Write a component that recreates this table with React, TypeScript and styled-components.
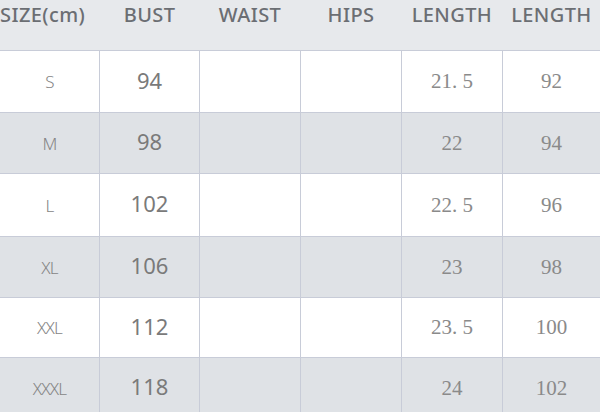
import React from 'react'
import styled, { createGlobalStyle } from 'styled-components'

const GlobalStyle = createGlobalStyle`
  html, body {
    margin: 0;
    padding: 0;
    background: #ffffff;
    overflow: hidden;
  }
`

const COLS = '99px 99px 100px 100px 100px 1fr'

const headers = ['SIZE(cm)', 'BUST', 'WAIST', 'HIPS', 'LENGTH', 'LENGTH']

const rows = [
  { size: 'S', bust: '94', len: '21. 5', full: '92', h: 61 },
  { size: 'M', bust: '98', len: '22', full: '94', h: 60 },
  { size: 'L', bust: '102', len: '22. 5', full: '96', h: 62 },
  { size: 'XL', bust: '106', len: '23', full: '98', h: 60 },
  { size: 'XXL', bust: '112', len: '23. 5', full: '100', h: 59 },
  { size: 'XXXL', bust: '118', len: '24', full: '102', h: 60 },
]

const App: React.FC = () => {
  return (
    <>
      <GlobalStyle />
      <StyledChart>
        <StyledHeader>
          {headers.map((h, i) => (
            <StyledHeadCell key={i} first={i === 0}>
              {h}
            </StyledHeadCell>
          ))}
        </StyledHeader>
        {rows.map((r, i) => (
          <StyledRow key={r.size} shaded={i % 2 === 1} style={{ height: r.h }}>
            <StyledSizeCell>{r.size}</StyledSizeCell>
            <StyledBustCell>{r.bust}</StyledBustCell>
            <StyledCell />
            <StyledCell />
            <StyledSerifCell>{r.len}</StyledSerifCell>
            <StyledSerifCell>{r.full}</StyledSerifCell>
          </StyledRow>
        ))}
      </StyledChart>
    </>
  )
}

const StyledChart = styled.div`
  width: 600px;
  height: 412px;
  overflow: hidden;
  display: flex;
  flex-direction: column;
  background: #c8ccd8;
  gap: 1px;
`

const StyledHeader = styled.div`
  display: grid;
  grid-template-columns: ${COLS};
  column-gap: 1px;
  height: 50px;
  flex-shrink: 0;
  background: #e7e9ec;
`

const StyledHeadCell = styled.div<{ first?: boolean }>`
  font-family: 'Noto Sans', 'Open Sans', sans-serif;
  font-size: 20px;
  font-weight: 500;
  letter-spacing: 0.4px;
  color: #6b6e73;
  text-align: center;
  line-height: 30px;
  white-space: nowrap;
  padding-right: ${(p) => (p.first ? '16px' : '0')};
`

const StyledRow = styled.div<{ shaded?: boolean }>`
  display: grid;
  grid-template-columns: ${COLS};
  column-gap: 1px;
  flex-shrink: 0;
  & > div {
    background: ${(p) => (p.shaded ? '#dfe2e6' : '#ffffff')};
  }
`

const StyledCell = styled.div`
  display: flex;
  align-items: center;
  justify-content: center;
`

const StyledSizeCell = styled(StyledCell)`
  font-family: 'Noto Sans', 'Open Sans', sans-serif;
  font-size: 17px;
  font-weight: 300;
  color: #858585;
  letter-spacing: -0.8px;
`

const StyledBustCell = styled(StyledCell)`
  font-family: 'Noto Sans', 'Open Sans', sans-serif;
  font-size: 22px;
  font-weight: 400;
  color: #7a7a7a;
  padding-bottom: 4px;
`

const StyledSerifCell = styled(StyledCell)`
  font-family: 'Liberation Serif', 'Times New Roman', serif;
  font-size: 21px;
  color: #8a8a8a;
  white-space: pre;
`

export default App
